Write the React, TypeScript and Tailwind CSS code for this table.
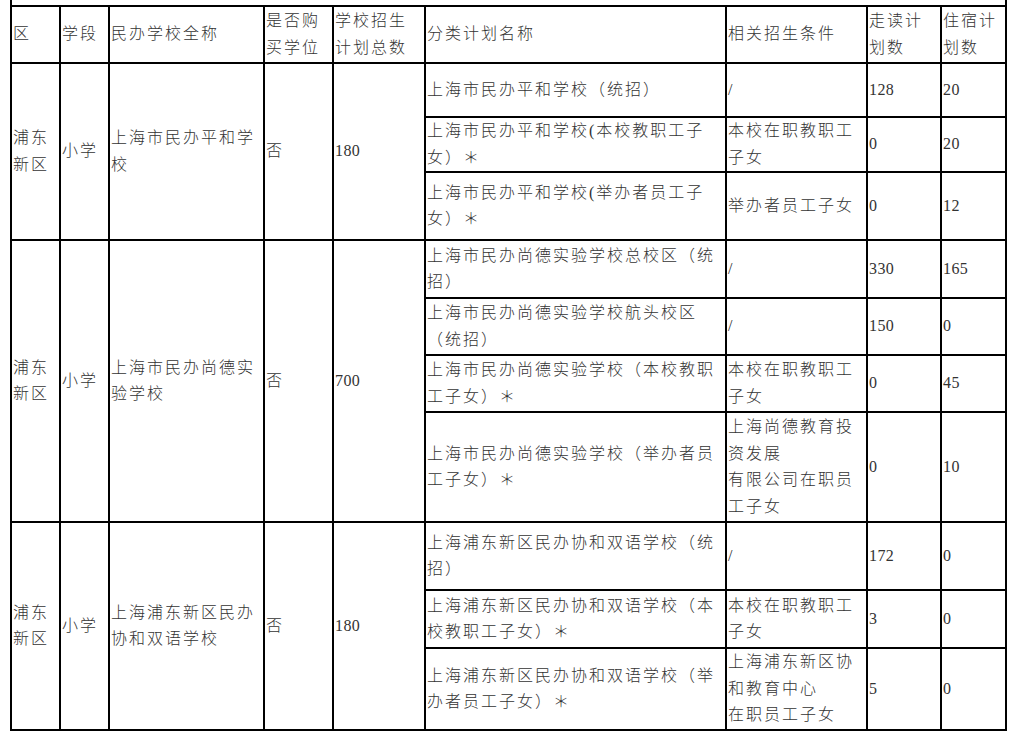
import React from "react";

const B = "border-r-2 border-b-2 border-black px-[1px] align-middle text-left whitespace-nowrap font-light";
const NUM = "tracking-[0.4px]";

type Sub = { name: React.ReactNode; cond: React.ReactNode; walk: string; board: string; h: string };
type Group = { district: React.ReactNode; stage: string; school: React.ReactNode; buy: string; total: string; rows: Sub[] };

const groups: Group[] = [
  {
    district: <>浦东<br />新区</>,
    stage: "小学",
    school: <>上海市民办平和学<br />校</>,
    buy: "否",
    total: "180",
    rows: [
      { name: "上海市民办平和学校（统招）", cond: "/", walk: "128", board: "20", h: "h-[54px]" },
      { name: <>上海市民办平和学校(本校教职工子<br />女）＊</>, cond: <>本校在职教职工<br />子女</>, walk: "0", board: "20", h: "h-[54px]" },
      { name: <>上海市民办平和学校(举办者员工子<br />女）＊</>, cond: "举办者员工子女", walk: "0", board: "12", h: "h-[68px]" },
    ],
  },
  {
    district: <>浦东<br />新区</>,
    stage: "小学",
    school: <>上海市民办尚德实<br />验学校</>,
    buy: "否",
    total: "700",
    rows: [
      { name: <>上海市民办尚德实验学校总校区（统<br />招）</>, cond: "/", walk: "330", board: "165", h: "h-[58px]" },
      { name: <>上海市民办尚德实验学校航头校区<br />（统招）</>, cond: "/", walk: "150", board: "0", h: "h-[57px]" },
      { name: <>上海市民办尚德实验学校（本校教职<br />工子女）＊</>, cond: <>本校在职教职工<br />子女</>, walk: "0", board: "45", h: "h-[57px]" },
      { name: <>上海市民办尚德实验学校（举办者员<br />工子女）＊</>, cond: <>上海尚德教育投<br />资发展<br />有限公司在职员<br />工子女</>, walk: "0", board: "10", h: "h-[110px]" },
    ],
  },
  {
    district: <>浦东<br />新区</>,
    stage: "小学",
    school: <>上海浦东新区民办<br />协和双语学校</>,
    buy: "否",
    total: "180",
    rows: [
      { name: <>上海浦东新区民办协和双语学校（统<br />招）</>, cond: "/", walk: "172", board: "0", h: "h-[68px]" },
      { name: <>上海浦东新区民办协和双语学校（本<br />校教职工子女）＊</>, cond: <>本校在职教职工<br />子女</>, walk: "3", board: "0", h: "h-[58px]" },
      { name: <>上海浦东新区民办协和双语学校（举<br />办者员工子女）＊</>, cond: <>上海浦东新区协<br />和教育中心<br />在职员工子女</>, walk: "5", board: "0", h: "h-[82px]" },
    ],
  },
];

export default function App() {
  return (
    <div
      className="min-h-screen bg-white pl-[10px] text-[16px] leading-[26.5px] tracking-[2px] text-[#333333]"
      style={{ fontFamily: '"Liberation Serif", "Noto Sans CJK SC", serif' }}
    >
      <table className="table-fixed border-separate border-spacing-0 w-[997px]">
        <colgroup>
          <col className="w-[51px]" />
          <col className="w-[49px]" />
          <col className="w-[155px]" />
          <col className="w-[69px]" />
          <col className="w-[92px]" />
          <col className="w-[301px]" />
          <col className="w-[141px]" />
          <col className="w-[74px]" />
          <col className="w-[65px]" />
        </colgroup>
        <tbody>
          <tr>
            <td colSpan={9} className="h-[5px] p-0 border-l-2 border-r-2 border-black text-[0px] leading-none"></td>
          </tr>
          <tr>
            <td className={`${B} border-l-2 border-t-2 h-[59px]`}>区</td>
            <td className={`${B} border-t-2`}>学段</td>
            <td className={`${B} border-t-2`}>民办学校全称</td>
            <td className={`${B} border-t-2`}>是否购<br />买学位</td>
            <td className={`${B} border-t-2`}>学校招生<br />计划总数</td>
            <td className={`${B} border-t-2`}>分类计划名称</td>
            <td className={`${B} border-t-2`}>相关招生条件</td>
            <td className={`${B} border-t-2`}>走读计<br />划数</td>
            <td className={`${B} border-t-2`}>住宿计<br />划数</td>
          </tr>
          {groups.map((g, gi) =>
            g.rows.map((r, ri) => (
              <tr key={`${gi}-${ri}`}>
                {ri === 0 && (
                  <>
                    <td rowSpan={g.rows.length} className={`${B} border-l-2`}>{g.district}</td>
                    <td rowSpan={g.rows.length} className={B}>{g.stage}</td>
                    <td rowSpan={g.rows.length} className={B}>{g.school}</td>
                    <td rowSpan={g.rows.length} className={B}>{g.buy}</td>
                    <td rowSpan={g.rows.length} className={`${B} ${NUM}`}>{g.total}</td>
                  </>
                )}
                <td className={`${B} ${r.h}`}>{r.name}</td>
                <td className={B}>{r.cond}</td>
                <td className={`${B} ${NUM}`}>{r.walk}</td>
                <td className={`${B} ${NUM}`}>{r.board}</td>
              </tr>
            ))
          )}
        </tbody>
      </table>
    </div>
  );
}
